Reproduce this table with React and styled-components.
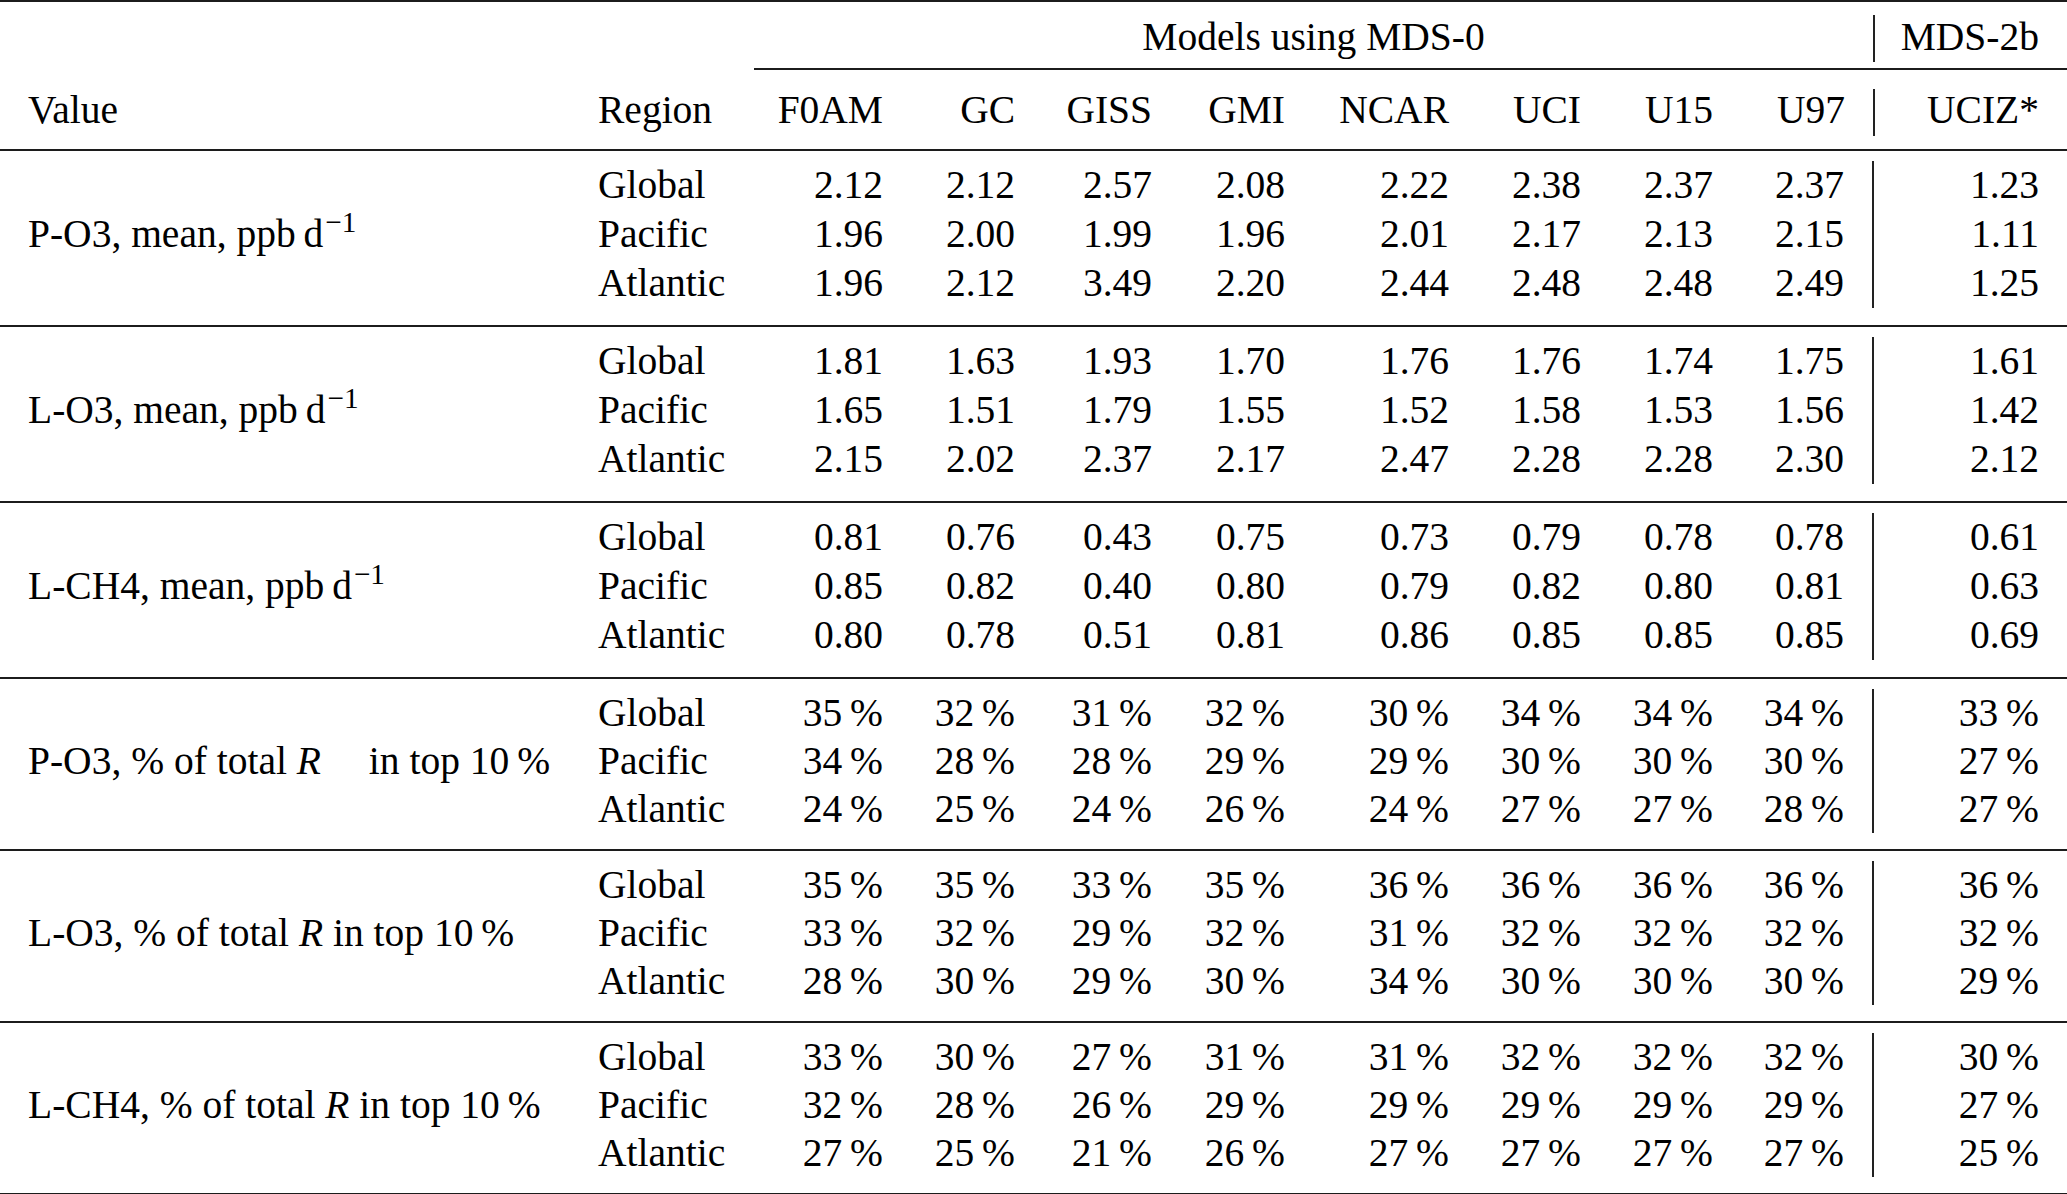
import React from "react";
import styled, { createGlobalStyle } from "styled-components";

const GlobalStyle = createGlobalStyle`
  html, body {
    margin: 0;
    padding: 0;
    background: #ffffff;
  }
  body {
    font-family: "Liberation Serif", "Times New Roman", serif;
    color: #000000;
  }
`;

const RULE = "#1c1c1c";
const COLS = [598, 156, 129, 132, 137, 133, 164, 132, 132, 160, 194];
const MODELS = ["F0AM", "GC", "GISS", "GMI", "NCAR", "UCI", "U15", "U97"];

const Table = styled.table`
  width: 2067px;
  table-layout: fixed;
  border-collapse: collapse;
  border-top: 2px solid ${RULE};
  border-bottom: 2px solid ${RULE};
  font-size: 39.5px;
`;

const Col = styled.col`
  width: ${(p) => p.$w}px;
`;

const Head = styled.thead`
  border-bottom: 2px solid ${RULE};
`;

const HeadRow = styled.tr`
  height: ${(p) => p.$h}px;
`;

const HeadCell = styled.th`
  font-weight: normal;
  padding: ${(p) => p.$pt || 0}px ${(p) => p.$pr || 0}px 0 ${(p) => p.$pl || 0}px;
  text-align: ${(p) => p.$align || "right"};
  vertical-align: middle;
  white-space: nowrap;
  line-height: 1.2;
`;

const Spanner = styled(HeadCell)`
  border-bottom: 2px solid ${RULE};
`;

/* the short vertical bar next to MDS-2b / UCIZ*, kept clear of the rules */
const SideHead = styled(HeadCell)`
  background: linear-gradient(#222, #222) no-repeat 0 ${(p) => p.$barTop}px /
    2px 47px;
`;

const SideSpanner = styled(SideHead)`
  border-bottom: 2px solid ${RULE};
`;

const Group = styled.tbody`
  border-bottom: 2px solid ${RULE};
`;

const Spacer = styled.tr`
  height: ${(p) => p.$h}px;
  td {
    padding: 0;
  }
`;

const Row = styled.tr`
  height: ${(p) => p.$h}px;
  line-height: ${(p) => p.$h}px;
`;

const Label = styled.td`
  padding: 0 0 0 28px;
  vertical-align: middle;
  white-space: nowrap;
`;

const Region = styled.td`
  padding: 0;
  text-align: left;
  white-space: nowrap;
`;

const Num = styled.td`
  padding: 0 ${(p) => p.$pr || 0}px 0 0;
  text-align: right;
  white-space: nowrap;
  border-left: ${(p) => (p.$divider ? `2px solid #222` : "none")};
`;

const Sup = styled.span`
  font-size: 0.74em;
  line-height: 0;
  vertical-align: 15px;
  margin-left: 2px;
`;

const Em = styled.i`
  font-style: italic;
`;

const Gap = styled.span`
  display: inline-block;
  width: 38px;
`;

const perDay = (
  <>
    ppb{"\u2009"}d<Sup>{"\u22121"}</Sup>
  </>
);

const groups = [
  {
    label: <>P-O3, mean, {perDay}</>,
    pct: false,
    rows: [
      ["Global", "2.12 2.12 2.57 2.08 2.22 2.38 2.37 2.37 1.23"],
      ["Pacific", "1.96 2.00 1.99 1.96 2.01 2.17 2.13 2.15 1.11"],
      ["Atlantic", "1.96 2.12 3.49 2.20 2.44 2.48 2.48 2.49 1.25"],
    ],
  },
  {
    label: <>L-O3, mean, {perDay}</>,
    pct: false,
    rows: [
      ["Global", "1.81 1.63 1.93 1.70 1.76 1.76 1.74 1.75 1.61"],
      ["Pacific", "1.65 1.51 1.79 1.55 1.52 1.58 1.53 1.56 1.42"],
      ["Atlantic", "2.15 2.02 2.37 2.17 2.47 2.28 2.28 2.30 2.12"],
    ],
  },
  {
    label: <>L-CH4, mean, {perDay}</>,
    pct: false,
    rows: [
      ["Global", "0.81 0.76 0.43 0.75 0.73 0.79 0.78 0.78 0.61"],
      ["Pacific", "0.85 0.82 0.40 0.80 0.79 0.82 0.80 0.81 0.63"],
      ["Atlantic", "0.80 0.78 0.51 0.81 0.86 0.85 0.85 0.85 0.69"],
    ],
  },
  {
    label: (
      <>
        P-O3, % of total <Em>R</Em>
        <Gap /> in top 10{"\u2009"}%
      </>
    ),
    pct: true,
    rows: [
      ["Global", "35 32 31 32 30 34 34 34 33"],
      ["Pacific", "34 28 28 29 29 30 30 30 27"],
      ["Atlantic", "24 25 24 26 24 27 27 28 27"],
    ],
  },
  {
    label: (
      <>
        L-O3, % of total <Em>R</Em> in top 10{"\u2009"}%
      </>
    ),
    pct: true,
    rows: [
      ["Global", "35 35 33 35 36 36 36 36 36"],
      ["Pacific", "33 32 29 32 31 32 32 32 32"],
      ["Atlantic", "28 30 29 30 34 30 30 30 29"],
    ],
  },
  {
    label: (
      <>
        L-CH4, % of total <Em>R</Em> in top 10{"\u2009"}%
      </>
    ),
    pct: true,
    rows: [
      ["Global", "33 30 27 31 31 32 32 32 30"],
      ["Pacific", "32 28 26 29 29 29 29 29 27"],
      ["Atlantic", "27 25 21 26 27 27 27 27 25"],
    ],
  },
];

const DataGroup = ({ group }) => {
  const rowH = group.pct ? 48 : 49;
  return (
    <Group>
      <Spacer $h={11}>
        <td colSpan={11} />
      </Spacer>
      {group.rows.map(([region, line], i) => {
        const values = line.split(" ");
        return (
          <Row key={region} $h={rowH}>
            {i === 0 && <Label rowSpan={3}>{group.label}</Label>}
            <Region>{region}</Region>
            {values.map((v, j) => (
              <Num key={j} $pr={j >= 7 ? 28 : 0} $divider={j === 8}>
                {group.pct ? `${v}\u2009%` : v}
              </Num>
            ))}
          </Row>
        );
      })}
      <Spacer $h={group.pct ? 17 : 18}>
        <td colSpan={11} />
      </Spacer>
    </Group>
  );
};

const App = () => (
  <>
    <GlobalStyle />
    <Table>
      <colgroup>
        {COLS.map((w, i) => (
          <Col key={i} $w={w} />
        ))}
      </colgroup>
      <Head>
        <HeadRow $h={68}>
          <HeadCell colSpan={2} />
          <Spanner colSpan={8} $align="center" $pt={5}>
            Models using MDS-0
          </Spanner>
          <SideSpanner $pr={28} $pt={5} $barTop={13}>
            MDS-2b
          </SideSpanner>
        </HeadRow>
        <HeadRow $h={81}>
          <HeadCell $align="left" $pl={28} $pt={3}>
            Value
          </HeadCell>
          <HeadCell $align="left" $pt={3}>
            Region
          </HeadCell>
          {MODELS.map((m, i) => (
            <HeadCell key={m} $pr={i === 7 ? 28 : 0} $pt={3}>
              {m}
            </HeadCell>
          ))}
          <SideHead $pr={28} $pt={3} $barTop={19}>
            UCIZ*
          </SideHead>
        </HeadRow>
      </Head>
      {groups.map((g, i) => (
        <DataGroup key={i} group={g} />
      ))}
    </Table>
  </>
);

export default App;
